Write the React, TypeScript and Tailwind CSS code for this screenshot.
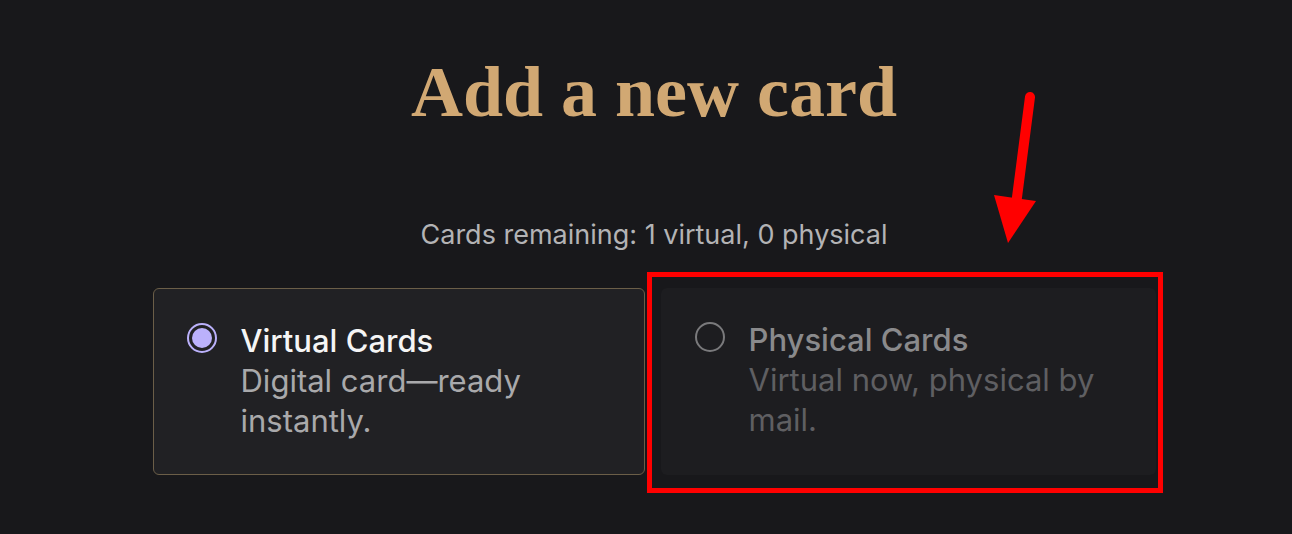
import React from "react";

const sans = { fontFamily: "Inter, 'Noto Sans', sans-serif" };

const App = () => {
  return (
    <div className="relative w-full h-[534px] bg-[#18181b] pl-4 overflow-hidden" style={sans}>
      <div className="flex flex-col items-center pt-[52px]">
        <h1
          className="text-[72px] leading-[80px] font-semibold text-[#d1a873]"
          style={{ fontFamily: "'Liberation Serif', serif" }}
        >
          Add a new card
        </h1>
        <p className="mt-[86px] text-[27px] leading-[34px] text-[#b3b3b5]">
          Cards remaining: 1 virtual, 0 physical
        </p>
        <div className="mt-[36px] flex gap-4">
          <div className="w-[492px] h-[187px] rounded-md border border-[#6b5e48] bg-[#212124] pl-[33px] pt-[32px] flex gap-[24px]">
            <div className="mt-[2px] w-[30px] h-[30px] rounded-full border-2 border-[#bbb1fb] flex items-center justify-center shrink-0">
              <div className="w-[20px] h-[20px] rounded-full bg-[#bbb1fb]"></div>
            </div>
            <div className="w-[320px]">
              <div className="text-[31px] leading-[40px] font-medium text-[#f5f5f5]">Virtual Cards</div>
              <div className="text-[31px] leading-[40px] text-[#a9a9ab]">Digital card—ready instantly.</div>
            </div>
          </div>
          <div className="relative w-[495px] h-[187px]">
            <div className="w-full h-full rounded-md bg-[#1d1d20] pl-[34px] pt-[32px] flex gap-[24px]">
              <div className="mt-[2px] w-[30px] h-[30px] rounded-full border-2 border-[#7a7a7c] shrink-0"></div>
              <div className="w-[370px]">
                <div className="text-[31px] leading-[40px] font-medium text-[#8a8a8c]">Physical Cards</div>
                <div className="text-[31px] leading-[40px] text-[#5f5f62]">Virtual now, physical by mail.</div>
              </div>
            </div>
            <div className="absolute -left-[14px] -right-[7px] -top-[16px] -bottom-[18px] border-[5px] border-[#ff0000] pointer-events-none"></div>
          </div>
        </div>
      </div>
      <svg className="absolute left-[990px] top-[85px]" width="56" height="165" viewBox="0 0 56 165">
        <line x1="40" y1="12" x2="26" y2="120" stroke="#ff0000" strokeWidth="10" strokeLinecap="round" />
        <polygon points="4,110 46,116 18,158" fill="#ff0000" />
      </svg>
    </div>
  );
};

export default App;
